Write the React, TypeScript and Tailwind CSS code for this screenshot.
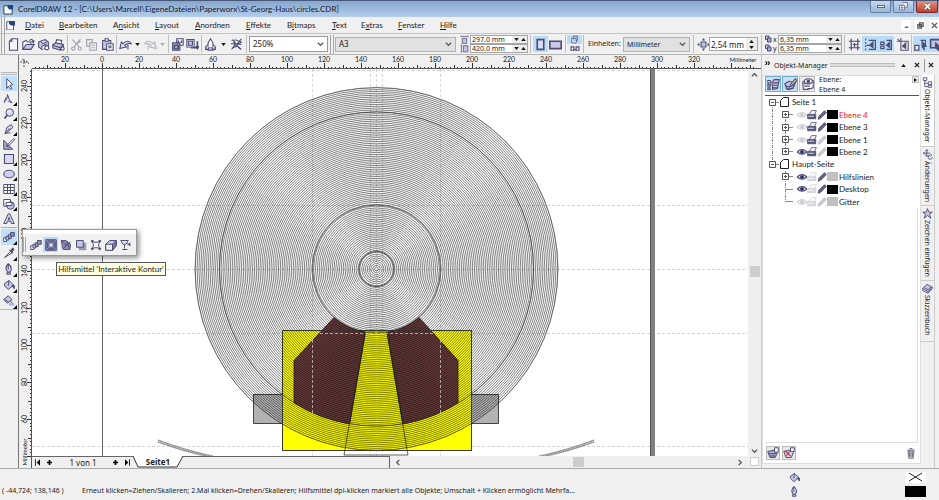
import type { ReactNode } from "react";

const INK = "#4c4c74";
const LAV = "#c4c4e4";

type IconProps = { children: ReactNode; className?: string };

function Icon({ children, className = "size-[13px]" }: IconProps) {
  return (
    <svg viewBox="0 0 16 16" className={`shrink-0 ${className}`} fill="none" stroke={INK} strokeWidth="1.3" aria-hidden="true">
      {children}
    </svg>
  );
}

const icons: Record<string, ReactNode> = {
  page: <path d="M6 1h7v14H3V4zM6 1v3H3" fill="#f4f4fc" />,
  open: <><path d="M1 14V5l4-2 2 2h4v3" fill="#fff" /><path d="M1 14l4-6h10l-4 6z" fill={LAV} /><path d="M9 3c3-2 5-1 5 2M12 4l2 2 1-3" /></>,
  save: <><path d="M2 5l8-3 4 3v6l-8 3-4-3z" fill={LAV} /><path d="M5 4l2 3 5-2M6 14v-4l5-2v4" fill="#fff" /><circle cx="12" cy="12" r="2.500" fill="#fff" /></>,
  print: <><path d="M4 7l2-5 6 1-1 5" fill="#fff" /><path d="M1 8l4-2 9 2v4l-4 3-9-3z" fill={LAV} /><path d="M1 9l9 3v3M10 12l4-4" /><circle cx="13" cy="13" r="2" fill="#fff" /></>,
  cut: <g stroke="#a0a0ac"><path d="M13 1L5 11M3 2l8 9M8 7l5-3" /><circle cx="4" cy="13" r="2" /><circle cx="12" cy="13" r="2" /></g>,
  copy: <g stroke="#a0a0ac"><path d="M2 2h7v8H2z" fill="#e8e8ee" /><path d="M6 6h8v9H6z" fill="#f4f4f8" /><path d="M8 9h4M8 12h4" /></g>,
  paste: <><path d="M2 3h10v11H2z" fill={LAV} /><path d="M5 1h4v3H5z" fill="#fff" /><path d="M7 7h8v8H7z" fill="#fff" /><path d="M9 10h4M9 12h4" /></>,
  undo: <path d="M1 13l2-8 2 2c4-4 8-4 10 0-4-1-6 0-8 2l2 2-8 2zM11 8v6" fill="#dcdcf2" />,
  redo: <path d="M15 13l-2-8-2 2c-4-4-8-4-10 0 4-1 6 0 8 2l-2 2 8 2zM5 8v6" fill="#eee" stroke="#b4b4c0" />,
  importI: <><path d="M2 6h9v9H2z" fill={LAV} /><path d="M7 1h8v8h-4V6H7z" fill="#fff" /><path d="M4 9h5v4H4zM9 3v3m4-3v3" strokeWidth="2" /></>,
  exportI: <><path d="M1 2h9v9H1z" fill="#fff" /><path d="M3 4h5v5H3z" fill={LAV} /><path d="M6 12h8M14 4v8M12 10l2 3 2-3" strokeWidth="2" /></>,
  launcher: <><path d="M8 1L5 6v6h6V6z" fill="#fff" /><path d="M5 8l-3 3v3h4M11 8l3 3v3h-4M6 12l-1 3h6l-1-3" fill={LAV} /></>,
  online: <><path d="M2 3c3-2 5 2 4 5s-3 5-4 6M6 2l8 3-6 4 6 5" /><path d="M14 1L9 7M1 7h8l5 1M3 12l6-2 4 4M4 4l4 6" /></>,
  portrait: <path d="M4 2h8v12H4z" fill="#dcdcf2" strokeWidth="2" />,
  landscape: <path d="M1 4h14v9H1z" fill="#c8c8ea" strokeWidth="2" />,
  widthI: <><path d="M4 6h8v9H4z" fill={LAV} /><path d="M2 1v3M14 1v3M2 2.500h12" /></>,
  heightI: <><path d="M6 3h8v11H6z" fill={LAV} /><path d="M1 2h3M1 14h3M2.500 2v12" /></>,
  pagesTop: <><path d="M3 6h8v8H3z" fill="#dff0ff" /><path d="M6 6V2h7v8h-2M6 9h3" /></>,
  pagesBottom: <path d="M1 5h5v6H1zM6 10h4M10 5h5v6h-5z" strokeWidth="2" fill="#fff" />,
  nudge: <><path d="M5 5h6v6H5z" fill={LAV} /><path d="M8 0l2 3H6zM8 16l2-3H6zM0 8l3-2v4zM16 8l-3-2v4z" fill={INK} stroke="none" /></>,
  dup: <><path d="M1 2h7v7H1z" fill={LAV} strokeWidth="2" /><path d="M5 6h7v8H5z" fill="#aaaad4" strokeWidth="2" /></>,
  grid: <path d="M4 1v14M12 1v14M1 4h14M1 12h14M8 6v5M6 8h5" strokeWidth="1.500" />,
  guide: <><path d="M2 1v14" strokeDasharray="2 2" /><path d="M6 3h8v11H6M3 9h4" strokeWidth="1.500" /><path d="M11 5v7L7 9z" fill={INK} /></>,
  object: <><path d="M8 3h6v11H8M1 5h4v3H1zM1 10h4v3H1z" strokeWidth="1.500" /><path d="M12 5v7L8 9z" fill={INK} /></>,
  dynamic: <><path d="M6 4h9v11H6zM1 4h4M6 0v4M2 1l3 3" /><path d="M12 6v7L8 10z" fill={INK} /></>,
  moveObj: <><path d="M1 9h5v6H1zM8 3h6v7" strokeWidth="1.500" fill="#eef" /><path d="M10 4l5 6-3 1 1 4-3-4z" fill={INK} /></>,
  treat: <><path d="M2 2h12v10H2z" fill={LAV} strokeWidth="2" /><path d="M8 6l7 6-3 1 1 3-5-4z" fill={INK} /></>,
  pick: <path d="M5 1l8 8-4 1 3 4-2 1-3-4-2 3z" fill="#fff" />,
  shape: <path d="M1 11c3-1 5-4 5-9l2 6 4 5-5-2M4 6l-2 7" fill="#d8d8ee" />,
  zoom: <><circle cx="9" cy="6" r="5" fill="#dcdcf6" /><path d="M6 9l-4 5" strokeWidth="2.500" /><path d="M6 6c0-2 2-3 4-2" stroke="#fff" /></>,
  freehand: <path d="M3 14l2-8 6-4 2 4-7 6zM5 12l4-5M2 14c4 0 5-1 8-1" fill="#d8d8ee" />,
  smart: <><path d="M1 3v12h12z" fill="#aaaacb" /><path d="M4 9l2 3h3M14 1L7 8l-2 3 4-2 7-7z" fill="#fff" /></>,
  rect: <path d="M2 2h12v12H2z" fill="#d8d8f3" strokeWidth="1.500" />,
  ellipse: <ellipse cx="8" cy="8" rx="7" ry="5" fill="#d0d0ee" strokeWidth="1.500" />,
  graph: <path d="M1 2h14v12H1zM1 6h14M1 10h14M6 2v12M10 2v12" fill="#fff" />,
  basic: <><path d="M1 2h9v9H1z" fill="#fff" /><circle cx="10" cy="10" r="5" fill={LAV} /><path d="M4 6h8v4H4z" fill="#fff" /></>,
  text: <path d="M1 14L7 1h2l6 13h-4l-1-3H6l-1 3zM7 9h2L8 6z" fill="#d0d0e8" />,
  blend: <><path d="M1 9h4v5H1z" fill="#fff" /><path d="M4 7h4v5H4zM7 5h4v5H7z" fill={LAV} /><path d="M10 2h5v5h-5z" fill="#8e8eb6" /></>,
  contour: <><path d="M1 1h14v14H1z" fill="#70709a" /><path d="M4 4h8v8H4z" fill="#9a9ac4" /><path d="M1 1l14 14M15 1L1 15" stroke="#a8a8cc" strokeWidth="0.8" /><circle cx="8" cy="8" r="1.500" fill="#fff" stroke="none" /></>,
  distort: <><path d="M2 2h5l7 5-1 7H5l-2-3z" fill="#8e8eb6" /><path d="M1 2l8 6-6 6M9 2l4 12M6 10l8-6" /></>,
  shadow: <><path d="M5 5h10v10H5z" fill="#9a9ab0" stroke="none" /><path d="M2 2h9v9H2z" fill={LAV} /></>,
  envelope: <><path d="M3 3c3 2 7 2 10 0-2 4-2 6 0 10-3-2-7-2-10 0 2-4 2-6 0-10z" fill="#fff" /><path d="M2 2h2v2H2zM12 2h2v2h-2zM2 12h2v2H2zM12 12h2v2h-2z" fill={INK} /></>,
  extrude: <><path d="M1 7l5-5h9v7l-5 6H1z" fill={LAV} /><path d="M1 7h9v8H1z" fill="#f4f4ff" /><path d="M10 7l5-5v7l-5 6z" fill="#77779f" /></>,
  transparent: <path d="M1 2h10L8 7H4zM6 8v5M3 14h7M10 6l4 2-2 1M10 8l4-3" fill="#e4e4f8" />,
  dropper: <><path d="M10 6l-8 8 5-3 5-3z" fill="#fff" /><path d="M9 4l4 4M11 5l2-3 1 1-2 3z" fill={INK} strokeWidth="2" /></>,
  pen: <><path d="M7 1c5 4 5 8 2 11H6C3 8 4 4 7 1z" fill="#dcdcf2" strokeWidth="1.500" /><path d="M7 2v7M5 13h5v2H5z" /></>,
  fill: <><path d="M2 6l6-4 6 6-7 6-5-5z" fill={LAV} /><path d="M8 2l-1 7M13 8c3 0 3 3 2 5l-3-4" fill={INK} /></>,
  ifill: <><path d="M1 6l6-5 5 5-6 5z" fill={LAV} /><path d="M2 6l5 3M10 8l3 4" /><path d="M8 11h7v3H8z" fill="#a8a8ff" stroke="none" /></>,
  layers: <><path d="M1 3h3v3H1zM1 8h3v2H1zM1 12h3v2H1z" fill="#fff" /><path d="M6 5l3-3h6l-2 11-6 1z" fill={LAV} /><path d="M7 6h7M7 9h6M7 12h6" /></>,
  editLayer: <><path d="M1 7l5-3 8 2-3 7-7 1z" fill={LAV} /><path d="M1 9l4 2 8-2M2 12l3 2 7-2" /><path d="M14 1l2 2-7 7-2 1 1-3z" fill="#ffe35b" /></>,
  viewLayer: <><path d="M2 5l4-2h9v9l-7 2H3z" fill="#fff" /><path d="M3 7h9M4 10h7M8 13h4" /><ellipse cx="9" cy="4" rx="5" ry="3" fill="#fff" /><circle cx="9" cy="4" r="1.500" fill={INK} /></>,
  newLayer: <><path d="M1 6l9-2 4 3-3 7H4z" fill="#aeaed4" /><path d="M2 9h10M3 12h8" /><path d="M10 1h5v6h-5z" fill="#fff" /></>,
  delLayer: <><path d="M1 6l9-2 4 3-3 7H4z" fill="#d4d4e4" /><path d="M3 5l7 7M9 6l-6 7" stroke="#c83348" strokeWidth="1.500" /><path d="M10 1h5v5h-5z" fill="#fff" /></>,
  trash: <path d="M4 5h8l-1 10H5zM3 4h10M6 2h4M6 6v7M8 6v7M10 6v7" fill="#c8c8d0" stroke="#777786" />,
  tree: <path d="M2 1h5v4H2zM4 5v9h5M4 9h5M9 7h5v4H9zM9 12h5v3H9z" fill="#fff" />,
  transform: <path d="M7 1v10M2 6h10M5 3l2-2 2 2M4 4L2 6l2 2M5 9l2 2 2-2M12 9a3 3 0 1 0 3 3M12 7l2 2-2 2" />,
  star: <path d="M8 1l2 5h5l-4 3 2 6-5-4-5 4 2-6-4-3h5z" fill={LAV} />,
  book: <><path d="M1 8l6-6 8 4-6 7z" fill={LAV} /><path d="M1 8v3l8 4 6-7V6M4 7l5 3 4-4" /></>,
};

const Sep = ({ w = "w-[5px]" }: { w?: string }) => (
  <span className={`flex h-[18px] shrink-0 justify-center ${w}`}><span className="w-px bg-[#bdbdbd]" /></span>
);
const Grip = () => <span className="mx-px h-[19px] w-[4px] shrink-0 border-x border-[#a8a8a8]" />;

function Tool({ name, label, w = "w-[15px]", on = false }: { name: string; label: string; w?: string; on?: boolean }) {
  return (
    <button aria-label={label} className={`flex h-[16px] shrink-0 items-center justify-center ${w} ${on ? "bg-[#b9dcf8]" : ""}`}>
      <Icon>{icons[name]}</Icon>
    </button>
  );
}

function Caret({ up = false, dim = false }: { up?: boolean; dim?: boolean }) {
  return (
    <svg viewBox="0 0 6 4" className="h-[3px] w-[5px] shrink-0" aria-hidden="true">
      <path d={up ? "M0 4h6L3 0z" : "M0 0h6L3 4z"} fill={dim ? "#aaa" : "#111"} />
    </svg>
  );
}

function Chevron({ d, className = "" }: { d: string; className?: string }) {
  return (
    <svg viewBox="0 0 8 8" className={`size-[7px] shrink-0 ${className}`} aria-hidden="true">
      <path d={d} fill="none" stroke="#555" strokeWidth="1.5" />
    </svg>
  );
}

function Drop({ label, value, box }: { label: string; value: string; box: string }) {
  return (
    <span className={`relative flex shrink-0 items-center border ${box}`}>
      <select aria-label={label} className="size-full appearance-none bg-transparent pl-[3px] leading-none outline-none">
        <option>{value}</option>
      </select>
      <Chevron d="M1 2l3 3 3-3" className="pointer-events-none absolute right-[3px]" />
    </span>
  );
}

function Spin({ label, value, w, tall = false }: { label: string; value: string; w: string; tall?: boolean }) {
  return (
    <span className={`flex items-center border border-[#a5a5a5] bg-white ${w} ${tall ? "h-[14px]" : "h-[9px]"}`}>
      <input aria-label={label} defaultValue={value} className="h-full w-0 flex-1 bg-transparent pl-px leading-none outline-none" />
      <span className={`flex h-full shrink-0 items-center justify-center bg-[#ededed] ${tall ? "w-[11px] flex-col-reverse gap-[3px]" : "w-[15px] gap-[2px]"}`}>
        <button aria-label={`${label} verringern`} className="flex"><Caret /></button>
        <button aria-label={`${label} erhöhen`} className="flex"><Caret up /></button>
      </span>
    </span>
  );
}

const menus: [string, number, string][] = [
  ["Datei", 0, "w-[34px]"], ["Bearbeiten", 0, "w-[54px]"], ["Ansicht", 1, "w-[42px]"], ["Layout", 0, "w-[40px]"],
  ["Anordnen", 0, "w-[51px]"], ["Effekte", 0, "w-[41px]"], ["Bitmaps", 1, "w-[45px]"], ["Text", 0, "w-[29px]"],
  ["Extras", 1, "w-[37px]"], ["Fenster", 0, "w-[42px]"], ["Hilfe", 0, "w-[30px]"],
];

function TitleBar() {
  const btn = "flex h-[12px] items-center justify-center rounded-b-[2px] border border-t-0";
  return (
    <header className="flex h-[17px] shrink-0 items-center border-t border-[#46587a] bg-linear-to-b from-[#86a6cd] to-[#b4cdea] pl-[3px]">
      <svg viewBox="0 0 12 12" className="size-[11px]" aria-hidden="true"><path d="M1 2h9v9H1z" fill="#fff" stroke="#234" /><path d="M5 1h6v5H7L5 4z" fill="#23447e" /></svg>
      <h1 className="ml-[4px] flex-1 text-[8px] leading-none whitespace-nowrap text-[#16202e]">CorelDRAW 12 - [C:\Users\Marcell\EigeneDateien\Paperworx\St-Georg-Haus\circles.CDR]</h1>
      <div className="flex gap-[2px] self-start pr-px">
        <button aria-label="Minimieren" className={`${btn} w-[21px] border-[#6580a5] bg-linear-to-b from-[#c6d8ee] to-[#9db8d9]`}><span className="h-[3px] w-[8px] border border-[#56677f] bg-white" /></button>
        <button aria-label="Wiederherstellen" className={`${btn} w-[21px] border-[#6580a5] bg-linear-to-b from-[#c6d8ee] to-[#9db8d9]`}>
          <Icon className="size-[9px]"><path d="M6 1h9v8h-4M1 6h9v8H1zM4 9h3v2H4z" fill="#fff" /></Icon>
        </button>
        <button aria-label="Schließen" className={`${btn} w-[22px] border-[#7b2c2c] bg-linear-to-b from-[#dc9384] to-[#c33c25]`}>
          <svg viewBox="0 0 8 8" className="size-[7px]"><path d="M1 1l6 6M7 1L1 7" stroke="#444" strokeWidth="3" /><path d="M1 1l6 6M7 1L1 7" stroke="#fff" strokeWidth="2" /></svg>
        </button>
      </div>
    </header>
  );
}

function MenuBar() {
  return (
    <nav className="flex h-[17px] shrink-0 items-center border-b border-[#c4c4c4] text-[8px]">
      <Grip />
      <svg viewBox="0 0 12 12" className="mr-[10px] size-[9px]" aria-hidden="true"><path d="M1 1h9v11H1z" fill="#fff" stroke="#234" /><path d="M4 0h8v6H7L4 4z" fill="#23447e" /></svg>
      {menus.map(([m, u, w]) => (
        <button key={m} className={`shrink-0 text-left leading-none ${w}`}>
          {m.slice(0, u)}<u className="underline-offset-1">{m[u]}</u>{m.slice(u + 1)}
        </button>
      ))}
      <div className="ml-auto flex gap-[4px]">
        {[["Fenster minimieren", "M2 6h4"], ["Fenster wiederherstellen", "M3 1h4v4H3zM1 3h4v4H1z"], ["Fenster schließen", "M1 1l6 6M7 1L1 7"]].map(([l, d]) => (
          <button key={l} aria-label={l} className="flex h-[11px] w-[10px] items-center justify-center bg-white"><Chevron d={d} className="size-[6px]" /></button>
        ))}
      </div>
    </nav>
  );
}

function Toolbar() {
  return (
    <div className="flex h-[21px] shrink-0 items-center overflow-hidden border-b border-[#b5b5b5] font-['Noto_Sans',sans-serif] text-[7px]">
      <Grip />
      <Tool name="page" label="Neu" /><Tool name="open" label="Öffnen" /><Tool name="save" label="Speichern" /><Tool name="print" label="Drucken" />
      <Sep w="w-[3px]" />
      <Tool name="cut" label="Ausschneiden" /><Tool name="copy" label="Kopieren" /><Tool name="paste" label="Einfügen" w="w-[16px]" />
      <Sep w="w-[2px]" />
      <Tool name="undo" label="Rückgängig" w="w-[16px]" /><button aria-label="Rückgängig-Liste" className="flex w-[9px] shrink-0 pl-[2px]"><Caret /></button>
      <Tool name="redo" label="Wiederherstellen" w="w-[16px]" /><button aria-label="Wiederherstellen-Liste" className="flex w-[8px] shrink-0 pl-[2px]"><Caret dim /></button>
      <Sep w="w-[4px]" />
      <Tool name="importI" label="Importieren" /><Tool name="exportI" label="Exportieren" />
      <Sep w="w-[3px]" />
      <Tool name="launcher" label="Anwendungsstarter" /><button aria-label="Anwendungen" className="flex w-[11px] shrink-0 justify-center"><Caret /></button>
      <Tool name="online" label="Corel Online" /><Sep w="w-[5px]" />
      <Drop label="Zoomfaktor" value="250%" box="h-[16px] w-[79px] border-[#999] bg-white text-[8px]" />
      <span className="w-px shrink-0" /><Grip />
      <Drop label="Papierformat" value="A3" box="h-[15px] w-[121px] border-[#b0b0b0] bg-[#e1e1e1] text-[8px]" />
      <span className="mr-px ml-[4px] flex shrink-0 flex-col"><Icon className="size-[9px]">{icons.widthI}</Icon><Icon className="size-[9px]">{icons.heightI}</Icon></span>
      <div className="flex shrink-0 flex-col"><Spin label="Papierbreite" value="297.0 mm" w="w-[58px]" /><Spin label="Papierhöhe" value="420.0 mm" w="w-[58px]" /></div>
      <Sep w="w-[5px]" />
      <Tool name="portrait" label="Hochformat" on /><Tool name="landscape" label="Querformat" />
      <Sep w="w-[4px]" />
      <div className="flex w-[15px] shrink-0 flex-col">
        <button aria-label="Alle Seiten" className="flex h-[9px] justify-center bg-[#b9dcf8]"><Icon className="size-[9px]">{icons.pagesTop}</Icon></button>
        <button aria-label="Aktuelle Seite" className="flex h-[9px] justify-center"><Icon className="h-[9px] w-[12px]">{icons.pagesBottom}</Icon></button>
      </div>
      <Sep w="w-[3px]" />
      <span className="w-[38px] shrink-0 pl-[3px] whitespace-nowrap">Einheiten:</span>
      <Drop label="Einheiten" value="Millimeter" box="h-[15px] w-[67px] border-[#b0b0b0] bg-[#e1e1e1]" />
      <Sep w="w-[7px]" />
      <Tool name="nudge" label="Schrittweite" w="w-[12px]" />
      <div className="flex shrink-0 text-[8px]"><Spin label="Verschiebung" value="2,54 mm" w="w-[49px]" tall /></div>
      <Sep w="w-[7px]" />
      <span className="flex w-[13px] shrink-0 flex-col leading-[9px]">
        <span className="flex"><Icon className="size-[8px]">{icons.dup}</Icon>x</span><span className="flex"><Icon className="size-[8px]">{icons.dup}</Icon>y</span>
      </span>
      <div className="flex shrink-0 flex-col"><Spin label="Duplikat x" value="6,35 mm" w="w-[64px]" /><Spin label="Duplikat y" value="6,35 mm" w="w-[64px]" /></div>
      <Sep w="w-[5px]" />
      <Tool name="grid" label="An Gitter ausrichten" /><Tool name="guide" label="An Hilfslinien ausrichten" on w="w-[16px]" /><Tool name="object" label="An Objekten ausrichten" on w="w-[16px]" /><Tool name="dynamic" label="Dynamische Hilfslinien" w="w-[16px]" />
      <Sep w="w-[3px]" />
      <Tool name="moveObj" label="Beim Verschieben zeichnen" on /><Tool name="treat" label="Als gefüllt behandeln" on />
    </div>
  );
}

const tools = ["pick", "shape", "zoom", "freehand", "smart", "rect", "ellipse", "graph", "basic", "text"];
const lowerTools = ["blend", "dropper", "pen", "fill", "ifill"];
const effects = ["blend", "contour", "distort", "shadow", "envelope", "extrude", "transparent"];

function ToolButton({ name, on }: { name: string; on?: boolean }) {
  const plain = name === "pick" || name === "smart" || name === "text";
  return (
    <button aria-label={name} className={`relative flex w-[16px] items-center justify-center ${on ? "bg-[#bfe0f8]" : ""} ${lowerTools.includes(name) ? "h-[16px]" : "h-[15px]"}`}>
      <Icon className="size-[12px]">{icons[name]}</Icon>
      {!plain && <svg viewBox="0 0 4 4" className="absolute right-0 bottom-0 size-[4px]"><path d="M4 0v4H0z" /></svg>}
    </button>
  );
}

function Toolbox() {
  return (
    <aside className="w-[19px] shrink-0 border-r border-[#777]">
      <div className="flex flex-col items-center pt-[17px]">
        <span className="mb-px h-[3px] w-[16px] border-y border-[#b5b5b5]" />
        {tools.map((t) => <ToolButton key={t} name={t} on={t === "pick"} />)}
        <span className="my-px h-px w-[16px] bg-[#aaa]" />
        {lowerTools.map((t) => <ToolButton key={t} name={t} on={t === "blend"} />)}
        <span className="h-px w-full bg-[#bbb]" />
      </div>
    </aside>
  );
}

const STEP = 37 / 20;

function HRuler() {
  const ticks = Array.from({ length: 196 }, (_, i) => i * 2 - 36).filter((v) => 102 + v * STEP < 756);
  return (
    <svg className="h-[14px] w-full shrink-0 bg-[#f0f0f0]" aria-hidden="true">
      <g transform="translate(-19 -55)">
        <path d={ticks.map((v) => `M${Math.round(102 + v * STEP) + 0.5} 69v-${v % 20 === 0 ? 6 : v % 10 === 0 ? 4 : 2}`).join("")} stroke="#333" />
        <path d="M32 68.500h729" stroke="#555" />
        <g fontSize="7" textAnchor="middle" fill="#222">
          {Array.from({ length: 18 }, (_, i) => i * 20 - 20).map((v) => <text key={v} x={102 + v * STEP} y="62">{Math.abs(v)}</text>)}
          <text x="743" y="62" fontSize="6">Millimeter</text>
        </g>
        <path d="M24 59v9M20 62h9M26 61l3 3M22 59l4 4" stroke="#555" strokeDasharray="2 1" fill="none" />
      </g>
    </svg>
  );
}

function VRuler() {
  const y = (v: number) => 530 - v * STEP;
  const ticks = Array.from({ length: 106 }, (_, i) => i * 2 + 40);
  return (
    <svg className="h-full w-[13px] shrink-0 bg-[#f0f0f0]" aria-hidden="true">
      <g transform="translate(-19 -69)">
        <path d={ticks.map((v) => `M32 ${Math.round(y(v)) + 0.5}h-${v % 20 === 0 ? 5 : v % 10 === 0 ? 4 : 2}`).join("")} stroke="#333" />
        <path d="M31.500 69v400" stroke="#555" />
        <g fontSize="7" textAnchor="middle" fill="#222">
          {[240, 220, 200, 180, 160, 140, 120, 100, 80, 60].map((v) => <text key={v} transform={`translate(27 ${y(v)}) rotate(-90)`}>{v}</text>)}
          <text transform="translate(27 452) rotate(-90)" fontSize="6">Millimeter</text>
        </g>
      </g>
    </svg>
  );
}

function Drawing() {
  const rings = Array.from({ length: 98 }, (_, i) => (i + 1) * STEP);
  return (
    <svg className="size-full bg-white" role="img" aria-label="Konzentrische Kreise">
      <g transform="translate(-32 -69)" fill="none">
        <g stroke="#d6d6d6" strokeDasharray="3 2">
          <path d="M32 205.500h716M32 269.500h716M32 333.500h716M32 446.500h716M32 70.500h716" />
          <path d="M312.500 69v387M370.500 69v387M376.500 69v387M382.500 69v387M440.500 69v387" />
        </g>
        <path d="M102.500 69v387" stroke="#666" />
        <path d="M650 69h5v387h-5z" fill="#808080" />
        <path d="M650.500 69v387" stroke="#555" />
        <path d="M253.500 394.500h29v29h-29zM470.500 394.500h28v29h-28z" fill="#b2b2b2" stroke="#444" />
        <path d="M282.500 330.500h189v120h-189z" fill="#ffff00" stroke="#55550a" />
        <path d="M334 317.500A64 64 0 0 0 365 332L349.500 424A157 157 0 0 1 294 403V360.500zM419 317.500A64 64 0 0 1 388 332L403 424A157 157 0 0 0 458 403V360.500z" fill="#6a3c3c" stroke="#3a1c1c" strokeWidth="0.8" />
        <g stroke="#000" strokeWidth="0.7" strokeOpacity="0.7">
          {rings.map((r) => <circle key={r} cx="376.5" cy="269" r={r} />)}
        </g>
        <g stroke="#333" strokeWidth="0.7">
          <circle cx="376.5" cy="269" r="181.5" strokeOpacity="0.6" /><circle cx="376.5" cy="269" r="157" />
          <circle cx="376.5" cy="269" r="64" /><circle cx="376.5" cy="269" r="17.5" strokeWidth="0.9" />
        </g>
        <path d="M365 332L344 455h64L387 332M282.500 330.500h189v120h-189z" stroke="#333" strokeWidth="0.8" />
        <path d="M365.500 332L349.500 424M387 332L403 424" stroke="#222" strokeWidth="1" />
        <path d="M320 333.500h120M312.500 340v74M440.500 340v74" stroke="#cbbebe" strokeDasharray="3 2" strokeOpacity="0.8" />
        <g stroke="#666" strokeWidth="0.8">
          <path d="M158 440q26 10 58 17M158 442q24 9 52 15M594 440q-26 10-58 17M594 442q-24 9-52 15" />
          <path d="M158 441q26 10 55 16M594 441q-26 10-55 16" stroke="#999" strokeWidth="3" strokeDasharray="1 1" />
        </g>
      </g>
    </svg>
  );
}

function PageBar() {
  const nav = "flex h-full items-center justify-center";
  return (
    <div className="flex h-[12px] shrink-0 bg-[#efefef] font-['Noto_Sans',sans-serif]">
      <div className="flex w-[358px] shrink-0 items-center border-t border-r border-[#666] text-[8px]">
        <button aria-label="Erste Seite" className={`${nav} w-[10px]`}><svg viewBox="0 0 6 8" className="h-[7px] w-[5px]"><path d="M0 0h1v8H0zM6 0v8L2 4z" /></svg></button>
        <button aria-label="Seite davor einfügen" className={`${nav} w-[14px]`}><svg viewBox="0 0 6 6" className="size-[5px]"><path d="M2 0h2v2h2v2H4v2H2V4H0V2h2z" /></svg></button>
        <span className="w-[54px] text-center text-[8px] leading-none">1 von 1</span>
        <button aria-label="Seite danach einfügen" className={`${nav} w-[11px]`}><svg viewBox="0 0 6 6" className="size-[5px]"><path d="M2 0h2v2h2v2H4v2H2V4H0V2h2z" /></svg></button>
        <button aria-label="Letzte Seite" className={`${nav} w-[12px]`}><svg viewBox="0 0 6 8" className="h-[7px] w-[5px]"><path d="M5 0h1v8H5zM0 0v8l4-4z" /></svg></button>
        <button className="relative -mt-px flex h-[12px] w-[50px] items-center justify-center text-[8px] leading-none font-bold">
          <svg viewBox="0 0 50 12" className="absolute inset-0 size-full" aria-hidden="true"><path d="M0 0l5 11h39l6-11" fill="#fff" stroke="#333" /></svg>
          <span className="relative">Seite1</span>
        </button>
      </div>
      <div className="flex flex-1 items-center px-[5px]">
        <Chevron d="M5 1L2 4l3 3" />
        <span className="flex flex-1 justify-center pl-[18px]"><span className="h-[10px] w-[11px] bg-[#cdcdcd]" /></span>
        <Chevron d="M3 1l3 3-3 3" />
      </div>
    </div>
  );
}

function Canvas() {
  return (
    <main className="relative flex min-w-0 flex-1 flex-col">
      <HRuler />
      <div className="flex min-h-0 flex-1">
        <VRuler />
        <div className="flex min-w-0 flex-1 flex-col">
          <div className="min-h-0 flex-1 overflow-hidden"><Drawing /></div>
          <PageBar />
        </div>
        <div className="flex w-[13px] shrink-0 flex-col items-center bg-[#efefef] pt-[3px]">
          <Chevron d="M1 5l3-3 3 3" />
          <span className="flex flex-1 items-center pt-[17px]"><span className="h-[11px] w-[10px] bg-[#cdcdcd]" /></span>
          <Chevron d="M1 3l3 3 3-3" />
          <span className="mt-[3px] mb-[2px] size-[9px] border border-[#ccc] bg-white" />
        </div>
      </div>
      <div className="absolute top-[174px] left-[3px] flex h-[27px] w-[115px] flex-col border border-[#999] bg-[#f1f1f1] shadow-[2px_2px_5px_rgba(0,0,0,0.45)]">
        <span className="h-[4px] bg-white" />
        <div className="flex flex-1 items-center">
          <span className="mr-[2px] h-[15px] w-[3px] border-x border-[#aaa]" />
          {effects.map((e) => (
            <button key={e} aria-label={e} className={`flex size-[15px] items-center justify-center ${e === "contour" ? "bg-[#b9dcf8]" : ""}`}><Icon className="size-[12px]">{icons[e]}</Icon></button>
          ))}
        </div>
      </div>
      <div role="tooltip" className="absolute top-[207px] left-[37px] flex h-[14px] w-[110px] items-center justify-center border border-[#555] bg-[#ffffe1] text-[8px] leading-none whitespace-nowrap">Hilfsmittel 'Interaktive Kontur'</div>
    </main>
  );
}

type Layer = { name: string; eye?: boolean; print?: boolean; edit?: boolean; color: string; box?: boolean; red?: boolean };
const pageLayers: Layer[] = [
  { name: "Ebene 4", print: true, edit: true, color: "bg-black", box: true, red: true },
  { name: "Ebene 3", print: true, edit: true, color: "bg-black", box: true },
  { name: "Ebene 1", print: true, color: "bg-black", box: true },
  { name: "Ebene 2", eye: true, print: true, color: "bg-black", box: true },
];
const masterLayers: Layer[] = [
  { name: "Hilfslinien", eye: true, edit: true, color: "bg-[#c0c0c0]", box: true },
  { name: "Desktop", eye: true, edit: true, color: "bg-black" },
  { name: "Gitter", color: "bg-[#c0c0c0]" },
];

function Expander({ minus = false }: { minus?: boolean }) {
  return (
    <svg viewBox="0 0 7 7" className="size-[7px] shrink-0 bg-white" aria-hidden="true">
      <path d={minus ? "M.5.5h6v6h-6zM2 3.500h3" : "M.5.5h6v6h-6zM2 3.500h3M3.500 2v3"} fill="none" stroke="#555" />
    </svg>
  );
}

function LayerRow({ layer }: { layer: Layer }) {
  return (
    <li className="flex items-center pl-[16px]">
      {layer.box ? <Expander /> : <span className="ml-[3px] w-[4px] border-t border-dashed border-[#888]" />}
      <span className="mr-[4px] w-[4px] border-t border-dashed border-[#888]" />
      <Icon className={`size-[10px] ${layer.eye ? "" : "opacity-25"}`}><path d="M0 8q8-8 16 0-8 7-16 0z" fill="#dde" strokeWidth="2" /><circle cx="8" cy="8" r="2.500" fill="#225" /></Icon>
      <Icon className={`size-[10px] ${layer.print ? "" : "opacity-25"}`}><path d="M4 7l3-6h8l-3 6" fill="#fff" /><path d="M1 7h13v7H1z" fill="#55557a" /><path d="M2 10h9" stroke="#fff" /></Icon>
      <Icon className={`size-[10px] ${layer.edit ? "" : "opacity-35"}`}><path d="M12 1l3 3-9 9-4 2 1-5z" fill="#66667c" /></Icon>
      <span className={`h-[9px] w-[11px] shrink-0 ${layer.color}`} />
      <span className={`ml-px text-[8px] leading-none ${layer.red ? "text-[#f02020]" : ""}`}>{layer.name}</span>
    </li>
  );
}

function PageRow({ name }: { name: string }) {
  return (
    <li className="flex items-center pl-[3px]">
      <Expander minus /><span className="mr-px w-[3px] border-t border-dashed border-[#888]" />
      <svg viewBox="0 0 9 10" className="mr-[3px] h-[10px] w-[9px]"><path d="M3.500.5h5v9h-8v-6z" fill="#fff" stroke="#222" /></svg>
      <span className="text-[8px] leading-none">{name}</span>
    </li>
  );
}

const tabs: [string, string, string][] = [
  ["tree", "Objekt-Manager", "h-[72px] bg-white"],
  ["transform", "Änderungen", "h-[59px] bg-[#f0f0f0]"],
  ["star", "Zeichen einfügen", "h-[75px] bg-[#f0f0f0]"],
  ["book", "Skizzenbuch", "h-[61px] bg-[#f0f0f0]"],
];

function Docker() {
  return (
    <aside className="flex w-[178px] shrink-0 flex-col border-l border-[#c8c8c8]">
      <header className="flex h-[20px] items-center pl-[3px]">
        <svg viewBox="0 0 8 6" className="-mt-[4px] h-[4px] w-[5px]"><path d="M0 0h2l2 3-2 3H0l2-3zM4 0h2l2 3-2 3H4l2-3z" /></svg>
        <h2 className="mr-[2px] ml-[4px] font-['Noto_Sans',sans-serif] text-[7px] leading-none">Objekt-Manager</h2>
        <span className="h-[4px] flex-1 border-y border-[#bbb] bg-[#ddd]" />
        <button aria-label="Einklappen" className="mx-[6px]"><Caret up /></button>
        <button aria-label="Andockfenster schließen" className="mr-[2px] px-[2px]"><svg viewBox="0 0 7 7" className="size-[6px]"><path d="M1 1l5 5M6 1L1 6" stroke="#222" strokeWidth="1.500" /></svg></button>
        <span className="h-[13px] w-px bg-[#999]" />
        <button aria-label="Alle schließen" className="mr-[4px] ml-[2px] px-px"><svg viewBox="0 0 7 7" className="size-[6px]"><path d="M1 1l5 5M6 1L1 6" stroke="#222" strokeWidth="1.500" /></svg></button>
      </header>
      <div className="flex flex-1">
        <section className="mb-[4px] flex flex-1 flex-col border border-[#ddd] bg-white">
          <div className="mr-px ml-[2px] flex h-[20px] border-b border-[#555]">
            {[["layers", "Objekteigenschaften anzeigen"], ["editLayer", "Über Ebenen bearbeiten"], ["viewLayer", "Ebenenansicht"]].map(([n, l], i) => (
              <button key={n} aria-label={l} className={`mr-px flex size-[16px] items-center justify-center border ${i < 2 ? "border-[#72a9d4] bg-[#c4e0f6]" : "border-[#bbb] bg-[#eaeaea]"}`}><Icon>{icons[n]}</Icon></button>
            ))}
            <p className="-mt-px ml-[3px] flex-1 font-['Noto_Sans',sans-serif] text-[7px] leading-[10px]">Ebene:<br />Ebene 4</p>
            <button aria-label="Optionen" className="flex size-[7px] items-center justify-center border border-[#bbb] bg-[#eee]"><svg viewBox="0 0 3 4" className="h-[4px] w-[3px]"><path d="M0 0l3 2-3 2z" /></svg></button>
          </div>
          <div className="relative">
            <svg className="absolute top-[7px] left-[9px] h-[110px] w-[16px]" aria-hidden="true"><path d="M.5 0v62M13.500 10v40M13.500 68v31" stroke="#888" strokeDasharray="3 1 1 1" fill="none" /></svg>
            <ul className="relative grid h-[112px] grid-rows-9 pl-[3px]">
              <PageRow name="Seite 1" />
              {pageLayers.map((l) => <LayerRow key={l.name} layer={l} />)}
              <PageRow name="Haupt-Seite" />
              {masterLayers.map((l) => <LayerRow key={l.name} layer={l} />)}
            </ul>
          </div>
          <div className="mx-[2px] flex-1 border-r border-b border-[#ddd]" />
          <div className="flex h-[20px] items-center px-[3px]">
            <button aria-label="Neue Ebene" className="mr-[2px] flex size-[14px] items-center justify-center border border-[#bbb] bg-[#e8e8e8]"><Icon className="size-[12px]">{icons.newLayer}</Icon></button>
            <button aria-label="Neue Hauptebene" className="flex size-[14px] items-center justify-center border border-[#bbb] bg-[#e8e8e8]"><Icon className="size-[12px]">{icons.delLayer}</Icon></button>
            <button aria-label="Löschen" className="ml-auto"><Icon className="size-[12px]">{icons.trash}</Icon></button>
          </div>
        </section>
        <div role="tablist" className="mr-[4px] w-[14px] border-r border-[#ccc] font-['Noto_Sans',sans-serif] text-[7px]">
          {tabs.map(([n, t, c]) => (
            <button key={n} role="tab" className={`flex w-full flex-col items-center gap-px border-b border-[#ccc] pt-[2px] ${c}`}>
              <Icon className="size-[11px]">{icons[n]}</Icon>
              <span className="leading-none whitespace-nowrap [writing-mode:vertical-rl]">{t}</span>
            </button>
          ))}
        </div>
      </div>
    </aside>
  );
}

function StatusBar() {
  return (
    <footer className="flex h-[32px] shrink-0 border-t border-[#aaa] font-['Noto_Sans',sans-serif] text-[7px]">
      <p className="flex flex-1 items-end pb-[4px] pl-[2px] leading-[10px] whitespace-nowrap">
        <span className="w-[80px]">( -44,724; 138,146 )</span>
        <span>Erneut klicken=Ziehen/Skalieren; 2.Mal klicken=Drehen/Skalieren; Hilfsmittel dpl-klicken markiert alle Objekte; Umschalt + Klicken ermöglicht Mehrfa...</span>
      </p>
      <div className="flex flex-col gap-[3px] pt-[3px] pr-[13px]">
        <div className="flex w-[137px] items-center justify-between"><Icon className="size-[11px]">{icons.fill}</Icon><svg viewBox="0 0 21 11" className="h-[11px] w-[21px] bg-white"><path d="M4 1l13 8M17 1L4 9" stroke="#222" /></svg></div>
        <div className="flex w-[137px] items-center justify-between"><Icon className="size-[11px]">{icons.pen}</Icon><span className="h-[11px] w-[21px] bg-black" /></div>
      </div>
    </footer>
  );
}

export default function App() {
  return (
    <div className="flex h-screen min-h-[500px] flex-col overflow-hidden bg-[#f0f0f0] font-['Lato','Noto_Sans',sans-serif] text-[#1c1c1c]">
      <TitleBar />
      <MenuBar />
      <Toolbar />
      <div className="flex min-h-0 flex-1">
        <Toolbox />
        <Canvas />
        <Docker />
      </div>
      <StatusBar />
    </div>
  );
}
